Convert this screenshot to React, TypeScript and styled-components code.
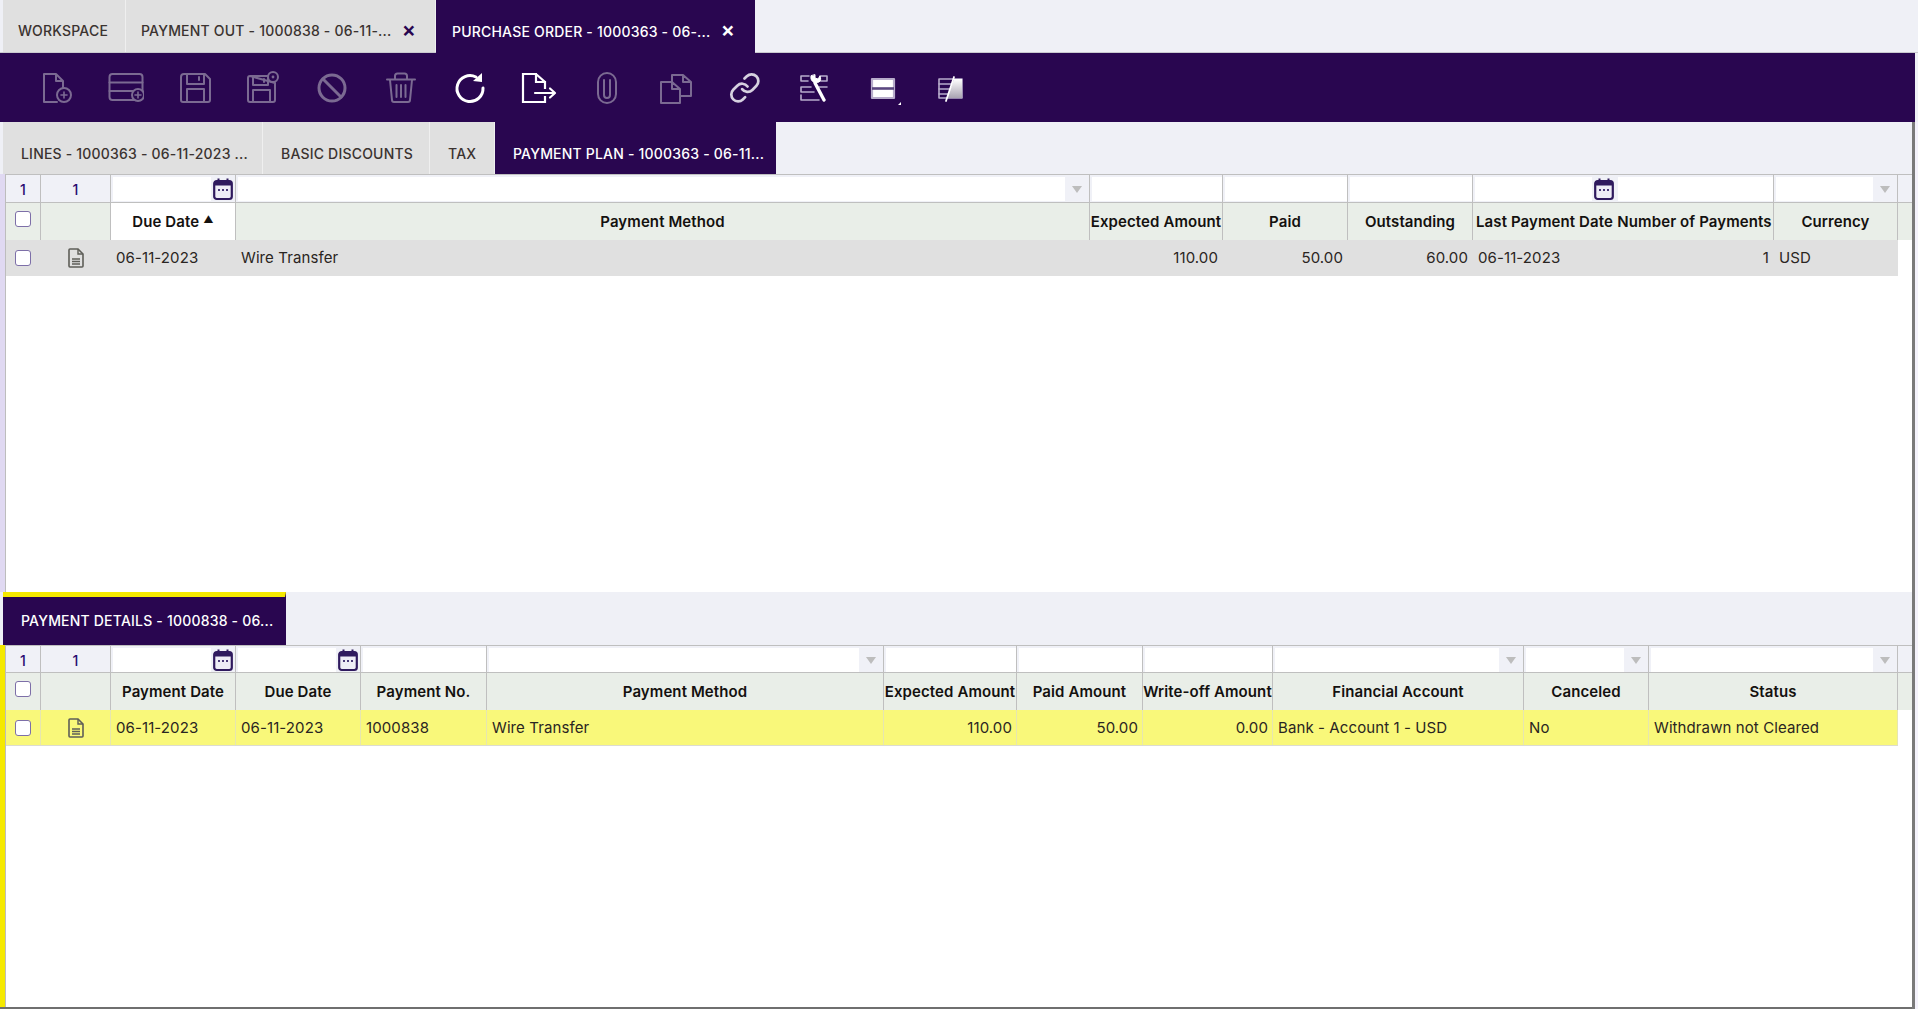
import React from 'react';
import styled, {createGlobalStyle} from 'styled-components';

const purple = '#290650';
const dim = '#7b6a92';
const bright = '#ffffff';
const soft = '#b7accb';

const GlobalStyle = createGlobalStyle`
  html, body {
    margin: 0;
    padding: 0;
    background: #eff0f6;
  }
  body {
    font-family: "Inter", "Open Sans", "Liberation Sans", sans-serif;
    overflow: hidden;
  }
`

const Page = styled.div`
  width: 1918px;
  height: 1009px;
  display: flex;
  flex-direction: column;
  overflow: hidden;
`
const TopTabs = styled.div`
  height: 52px;
  flex: none;
  display: flex;
  padding-left: 3px;
  border-bottom: 1px solid #c9c9cf;
`
const Tab = styled.div<{$w: number; $active?: boolean}>`
  width: ${p => p.$w}px;
  box-sizing: border-box;
  flex: none;
  display: flex;
  align-items: center;
  justify-content: space-between;
  padding: 9px 19px 0 ${p => (p.$active ? '16px' : '15px')};
  margin-bottom: ${p => (p.$active ? '-1px' : '0')};
  font-size: 14px;
  font-weight: 500;
  letter-spacing: 0.2px;
  white-space: nowrap;
  overflow: hidden;
  color: ${p => (p.$active ? '#fff' : '#3b3330')};
  background: ${p => (p.$active ? purple : '#e0e0e0')};
  border-right: 1px solid ${p => (p.$active ? purple : '#efefef')};
`
const Close = styled.span<{$light?: boolean}>`
  font-size: 21px;
  line-height: 14px;
  font-weight: 600;
  margin-top: -2px;
  color: ${p => (p.$light ? '#fff' : purple)};
`
const Toolbar = styled.div`
  height: 69px;
  flex: none;
  margin-right: 3px;
  padding-left: 22.6px;
  display: flex;
  align-items: center;
  background: ${purple};
`
const ToolButton = styled.div`
  width: 68.8px;
  flex: none;
  display: flex;
  justify-content: center;
  svg {
    display: block;
  }
`
const Body = styled.div`
  flex: 1;
  min-height: 0;
  display: flex;
`
const Main = styled.div`
  width: 1912px;
  flex: none;
  display: flex;
  flex-direction: column;
`
const ScrollEdge = styled.div`
  width: 3px;
  flex: none;
  background: #7a7a7a;
`
const LightEdge = styled.div`
  width: 3px;
  flex: none;
  background: #f4f2fb;
`
const SubTabs = styled.div<{$h: number}>`
  height: ${p => p.$h}px;
  flex: none;
  display: flex;
  padding-left: 3px;
  box-sizing: border-box;
`
const SubTab = styled(Tab)<{$marked?: boolean}>`
  padding: ${p => (p.$marked ? '0 14px 2px 18px' : '10px 14px 0 18px')};
  margin-bottom: 0;
  border-top: ${p => (p.$marked ? '5px solid #f5e900' : 'none')};
`
const Pane = styled.div<{$strip: string; $grow?: boolean}>`
  height: ${p => (p.$grow ? 'auto' : '418px')};
  flex: ${p => (p.$grow ? '1' : 'none')};
  min-height: 0;
  display: flex;
  background: #fff;
  border-left: 5px solid ${p => p.$strip};
  box-sizing: border-box;
`
const PaneEdge = styled.div`
  width: 1px;
  flex: none;
  background: #bdbdbd;
`
const PaneBody = styled.div`
  flex: 1;
  min-width: 0;
`
const Row = styled.div<{$cols: string; $h: number}>`
  display: grid;
  grid-template-columns: ${p => p.$cols};
  height: ${p => p.$h}px;
  box-sizing: border-box;
`
const FilterRow = styled(Row)`
  border-top: 1px solid #bfbfbf;
  border-bottom: 1px solid #bfbfbf;
  background: #f0f1f7;
`
const HeaderRow = styled(Row)`
  background: #e9eee8;
`
const DataRow = styled(Row)<{$tone: 'grey' | 'yellow'}>`
  width: max-content;
  background: ${p => (p.$tone === 'grey' ? '#e0e0e0' : '#f9f87a')};
  border-bottom: 1px solid ${p => (p.$tone === 'grey' ? '#e0e0e0' : '#dcdcd0')};
`
const FilterCell = styled.div<{$flush?: boolean}>`
  display: flex;
  min-width: 0;
  padding: 2px 0 2px 2px;
  box-sizing: border-box;
  border-right: ${p => (p.$flush ? 'none' : '1px solid #bfbfbf')};
`
const CountCell = styled.div`
  display: flex;
  align-items: center;
  justify-content: center;
  font-size: 14px;
  font-weight: 500;
  color: #2a0a70;
  border-right: 1px solid #bfbfbf;
`
const FilterInput = styled.div`
  flex: 1;
  min-width: 0;
  background: #fff;
`
const FilterButton = styled.div<{$w: number}>`
  width: ${p => p.$w}px;
  flex: none;
  display: flex;
  align-items: center;
  justify-content: center;
`
const HeaderCell = styled.div<{$sorted?: boolean; $flush?: boolean}>`
  display: flex;
  align-items: center;
  justify-content: center;
  min-width: 0;
  white-space: nowrap;
  font-size: 15px;
  font-weight: 600;
  letter-spacing: 0.1px;
  color: #14110f;
  background: ${p => (p.$sorted ? '#fff' : 'transparent')};
  border-right: ${p => (p.$flush ? 'none' : '1px solid #bfbfbf')};
`
const SortMark = styled.span`
  font-size: 10px;
  margin: -6px 0 0 4px;
`
const DataCell = styled.div<{$right?: boolean; $lined?: boolean}>`
  display: flex;
  align-items: center;
  justify-content: ${p => (p.$right ? 'flex-end' : 'flex-start')};
  padding: 0 ${p => (p.$right ? '4px' : '0')} 0 ${p => (p.$right ? '0' : '5px')};
  min-width: 0;
  white-space: nowrap;
  font-size: 15px;
  letter-spacing: 0.1px;
  color: #2a2522;
  border-right: 1px solid ${p => (p.$lined ? '#e6e6b0' : 'transparent')};
`
const IconCell = styled(DataCell)`
  justify-content: center;
  padding: 0;
`
const Box = styled.span<{$top?: boolean}>`
  display: block;
  width: 14px;
  height: 14px;
  background: #fff;
  border: 1.5px solid #7d6fa8;
  border-radius: 3px;
  margin-top: ${p => (p.$top ? '-5px' : '0')};
`
const BoxCell = styled.div<{$lined?: boolean; $grey?: boolean}>`
  display: flex;
  align-items: center;
  justify-content: center;
  border-right: 1px solid ${p => (p.$grey ? '#bfbfbf' : p.$lined ? '#e6e6b0' : 'transparent')};
`
const BottomLine = styled.div`
  height: 2px;
  flex: none;
  background: #6f6f6f;
`

type Col = {
    width: number
    title: string
    filter: 'input' | 'date' | 'select'
    value: string
    right?: boolean
    sorted?: boolean
    flush?: boolean
}

const planCols: Col[] = [
    {width: 125, title: 'Due Date', filter: 'date', value: '06-11-2023', sorted: true},
    {width: 854, title: 'Payment Method', filter: 'select', value: 'Wire Transfer'},
    {width: 133, title: 'Expected Amount', filter: 'input', value: '110.00', right: true},
    {width: 125, title: 'Paid', filter: 'input', value: '50.00', right: true},
    {width: 125, title: 'Outstanding', filter: 'input', value: '60.00', right: true},
    {width: 143, title: 'Last Payment Date', filter: 'date', value: '06-11-2023', flush: true},
    {width: 158, title: 'Number of Payments', filter: 'input', value: '1', right: true},
    {width: 124, title: 'Currency', filter: 'select', value: 'USD'}
]

const detailCols: Col[] = [
    {width: 125, title: 'Payment Date', filter: 'date', value: '06-11-2023'},
    {width: 125, title: 'Due Date', filter: 'date', value: '06-11-2023'},
    {width: 126, title: 'Payment No.', filter: 'input', value: '1000838'},
    {width: 397, title: 'Payment Method', filter: 'select', value: 'Wire Transfer'},
    {width: 133, title: 'Expected Amount', filter: 'input', value: '110.00', right: true},
    {width: 126, title: 'Paid Amount', filter: 'input', value: '50.00', right: true},
    {width: 130, title: 'Write-off Amount', filter: 'input', value: '0.00', right: true},
    {width: 251, title: 'Financial Account', filter: 'select', value: 'Bank - Account 1 - USD'},
    {width: 125, title: 'Canceled', filter: 'select', value: 'No'},
    {width: 249, title: 'Status', filter: 'select', value: 'Withdrawn not Cleared'}
]

const Calendar = () => (
    <svg width="20" height="24" viewBox="0 0 20 24">
        <rect x="1.2" y="4" width="17.6" height="18" rx="2.5" fill="#eeedf6" stroke="#2f1a5e" strokeWidth="2.2"/>
        <rect x="1" y="4" width="18" height="4.5" fill="#2f1a5e"/>
        <rect x="4.5" y="1.5" width="2" height="4" fill="#2f1a5e"/>
        <rect x="13.5" y="1.5" width="2" height="4" fill="#2f1a5e"/>
        <rect x="5" y="12" width="2" height="2" fill="#4a3a78"/>
        <rect x="9" y="12" width="2" height="2" fill="#4a3a78"/>
        <rect x="13" y="12" width="2" height="2" fill="#4a3a78"/>
    </svg>
)

const Arrow = () => (
    <svg width="10" height="7" viewBox="0 0 10 7">
        <polygon points="0,0 10,0 5,7" fill="#bdbdbd"/>
    </svg>
)

const DocIcon = () => (
    <svg width="16" height="20" viewBox="0 0 16 20">
        <path d="M2 1 H10 L15 6 V18 a1 1 0 0 1 -1 1 H2 a1 1 0 0 1 -1 -1 V2 a1 1 0 0 1 1 -1 Z" fill="none" stroke="#5e5e58" strokeWidth="1.6"/>
        <path d="M10 1 V6 H15" fill="none" stroke="#5e5e58" strokeWidth="1.4"/>
        <path d="M4 11 H12 M4 13.5 H12 M4 16 H12" stroke="#5e5e58" strokeWidth="1.4"/>
    </svg>
)

const Grid: React.FC<{cols: Col[]; tone: 'grey' | 'yellow'; filterH: number}> = ({cols, tone, filterH}) => {
    const widths = cols.map(c => c.width + 'px').join(' ')
    const template = `35px 70px ${widths} 1fr`
    const dataTemplate = `35px 70px ${widths}`
    const yellow = tone === 'yellow'
    return (
        <>
            <FilterRow $cols={template} $h={filterH}>
                <CountCell>1</CountCell>
                <CountCell>1</CountCell>
                {cols.map(c => (
                    <FilterCell key={c.title} $flush={c.flush}>
                        <FilterInput/>
                        {c.filter === 'date' && <FilterButton $w={24}><Calendar/></FilterButton>}
                        {c.filter === 'select' && <FilterButton $w={24}><Arrow/></FilterButton>}
                    </FilterCell>
                ))}
            </FilterRow>
            <HeaderRow $cols={template} $h={37}>
                <BoxCell $grey><Box $top/></BoxCell>
                <HeaderCell/>
                {cols.map(c => (
                    <HeaderCell key={c.title} $sorted={c.sorted} $flush={c.flush}>
                        {c.title}
                        {c.sorted && <SortMark>▲</SortMark>}
                    </HeaderCell>
                ))}
            </HeaderRow>
            <DataRow $cols={dataTemplate} $h={36} $tone={tone}>
                <BoxCell $lined={yellow}><Box/></BoxCell>
                <IconCell $lined={yellow}><DocIcon/></IconCell>
                {cols.map(c => (
                    <DataCell key={c.title} $right={c.right} $lined={yellow}>{c.value}</DataCell>
                ))}
            </DataRow>
        </>
    )
}

const Plus: React.FC<{x: number; y: number; r: number; color: string}> = ({x, y, r, color}) => (
    <>
        <circle cx={x} cy={y} r={r} fill={purple} stroke={color} strokeWidth="2"/>
        <path d={`M${x - 3} ${y} H${x + 3} M${x} ${y - 3} V${y + 3}`} stroke={color} strokeWidth="1.6"/>
    </>
)

const Icon: React.FC<{children: React.ReactNode; color?: string; width?: number}> = ({children, color = dim, width = 2}) => (
    <svg width="36" height="36" viewBox="0 0 36 36" fill="none" stroke={color} strokeWidth={width} strokeLinejoin="round" strokeLinecap="round">
        {children}
    </svg>
)

const toolIcons = [
    <Icon key="new">
        <path d="M5 4 H17 L24 11 V20 M17 4 V11 H24 M5 4 V32 H18"/>
        <Plus x={25} y={25} r={7} color={dim}/>
    </Icon>,
    <Icon key="row">
        <rect x="1.5" y="4" width="33" height="26" rx="3"/>
        <path d="M1.5 12.5 H34.5 M1.5 21 H34.5"/>
        <Plus x={30} y={25} r={6} color={dim}/>
    </Icon>,
    <Icon key="save">
        <path d="M7 4 H28 L33 9 V30 a2 2 0 0 1 -2 2 H6 a2 2 0 0 1 -2 -2 V7 a3 3 0 0 1 3 -3 Z"/>
        <path d="M10 4 V14 H27 V4 M22 7 V10 M10 32 V19 H27 V32"/>
    </Icon>,
    <Icon key="saveclose">
        <path d="M5 6 H24 M30 13 V30 a2 2 0 0 1 -2 2 H5 a2 2 0 0 1 -2 -2 V8 a2 2 0 0 1 2 -2 Z"/>
        <path d="M8 6 V15 H23 V6 M19 9 V12 M8 32 V20 H25 V32"/>
        <circle cx="28" cy="7" r="5" fill={purple}/>
        <circle cx="28" cy="7" r="1.4" fill={dim} stroke="none"/>
    </Icon>,
    <Icon key="undo" width={3}>
        <circle cx="18" cy="18" r="13"/>
        <path d="M9 9 L27 27"/>
    </Icon>,
    <Icon key="trash">
        <path d="M4 9.5 H32 M12 9 V6 a2.5 2.5 0 0 1 2.5 -2.5 H21.5 a2.5 2.5 0 0 1 2.5 2.5 V9"/>
        <path d="M7 10 L9 30 a2 2 0 0 0 2 2 H25 a2 2 0 0 0 2 -2 L29 10"/>
        <path d="M13.5 15 V27 M18 15 V27 M22.5 15 V27"/>
    </Icon>,
    <Icon key="refresh" color={bright} width={3}>
        <path d="M24 7 A13 13 0 1 0 31 18"/>
        <polygon points="30,3 30,12 21,11" fill={bright} stroke="none"/>
    </Icon>,
    <Icon key="export" color={bright} width={2.2}>
        <path d="M24 18 V12 L15 4 H2 V32 H24 V27 M15 4 V12 H24" strokeLinecap="square" strokeLinejoin="miter"/>
        <path d="M14 23 H33 M29 18.5 L34 23 L29 27.5"/>
    </Icon>,
    <Icon key="attach">
        <rect x="9" y="3" width="18" height="30" rx="9"/>
        <path d="M15 10 V25 a3 3 0 0 0 6 0 V10"/>
    </Icon>,
    <Icon key="copy">
        <path d="M14 12 V5 H25 L33 12 V26 H22 M25 5 V12 H33"/>
        <path d="M3 12 H14 L22 19 V33 H3 Z M14 12 V19 H22"/>
    </Icon>,
    <Icon key="link" color="#d6d0e0" width={2}>
        <g transform="translate(1.5 1.5) scale(1.36)">
            <path d="M10 13a5 5 0 0 0 7.54.54l3-3a5 5 0 0 0-7.07-7.07l-1.72 1.71"/>
            <path d="M14 11a5 5 0 0 0-7.54-.54l-3 3a5 5 0 0 0 7.07 7.07l1.71-1.71"/>
        </g>
    </Icon>,
    <Icon key="wrench" color={soft} width={1.6}>
        <path d="M5 6 H13 M5 6 V11 H12 M24 6 H31 V11 H24 M5 17 H15 M23 17 H31 M5 17 V22 H18 M5 25 V30 H23"/>
        <path d="M19 13 L28 30" stroke={bright} strokeWidth="3.4"/>
        <path d="M15 6 C14 11 18 14 23 12 C25 11 25 8 24 6 L22 9 L19 8 L19 5 Z" fill={bright} stroke={bright} strokeWidth="1"/>
    </Icon>,
    <Icon key="form" color={soft} width={2.2}>
        <rect x="7" y="9" width="22" height="19" fill="#fff"/>
        <path d="M7 18.5 H29" stroke="#5a4780" strokeWidth="2.6" strokeLinecap="butt"/>
        <polygon points="36,32 36,35 33,35" fill="#fff" stroke="none"/>
    </Icon>,
    <Icon key="note" color={soft} width={1.6}>
        <defs>
            <linearGradient id="noteFill" x1="0" y1="0" x2="0" y2="1">
                <stop offset="0" stopColor="#ffffff"/>
                <stop offset="1" stopColor="#a9a4b2"/>
            </linearGradient>
        </defs>
        <rect x="6" y="9" width="23" height="19"/>
        <path d="M6 14 H19 M6 19 H17 M6 24 H15"/>
        <polygon points="21,9 29,9 29,28 14,28" fill="url(#noteFill)" stroke="none"/>
        <path d="M21 7 L13 31" stroke={bright} strokeWidth="1.8"/>
    </Icon>
]

const App: React.FC = () => {
    return (
        <Page>
            <GlobalStyle/>
            <TopTabs>
                <Tab $w={123}>WORKSPACE</Tab>
                <Tab $w={310}>PAYMENT OUT - 1000838 - 06-11-...<Close>×</Close></Tab>
                <Tab $w={319} $active>PURCHASE ORDER - 1000363 - 06-...<Close $light>×</Close></Tab>
            </TopTabs>
            <Toolbar>
                {toolIcons.map(icon => <ToolButton key={icon.key}>{icon}</ToolButton>)}
            </Toolbar>
            <Body>
                <Main>
                    <SubTabs $h={52}>
                        <SubTab $w={260}>LINES - 1000363 - 06-11-2023 ...</SubTab>
                        <SubTab $w={167}>BASIC DISCOUNTS</SubTab>
                        <SubTab $w={65}>TAX</SubTab>
                        <SubTab $w={281} $active>PAYMENT PLAN - 1000363 - 06-11...</SubTab>
                    </SubTabs>
                    <Pane $strip="#e0d9f2">
                        <PaneEdge/>
                        <PaneBody>
                            <Grid cols={planCols} tone="grey" filterH={29}/>
                        </PaneBody>
                    </Pane>
                    <SubTabs $h={53}>
                        <SubTab $w={283} $active $marked>PAYMENT DETAILS - 1000838 - 06...</SubTab>
                    </SubTabs>
                    <Pane $strip="#f5e900" $grow>
                        <PaneEdge/>
                        <PaneBody>
                            <Grid cols={detailCols} tone="yellow" filterH={28}/>
                        </PaneBody>
                    </Pane>
                    <BottomLine/>
                </Main>
                <ScrollEdge/>
                <LightEdge/>
            </Body>
        </Page>
    );
}

export default App
